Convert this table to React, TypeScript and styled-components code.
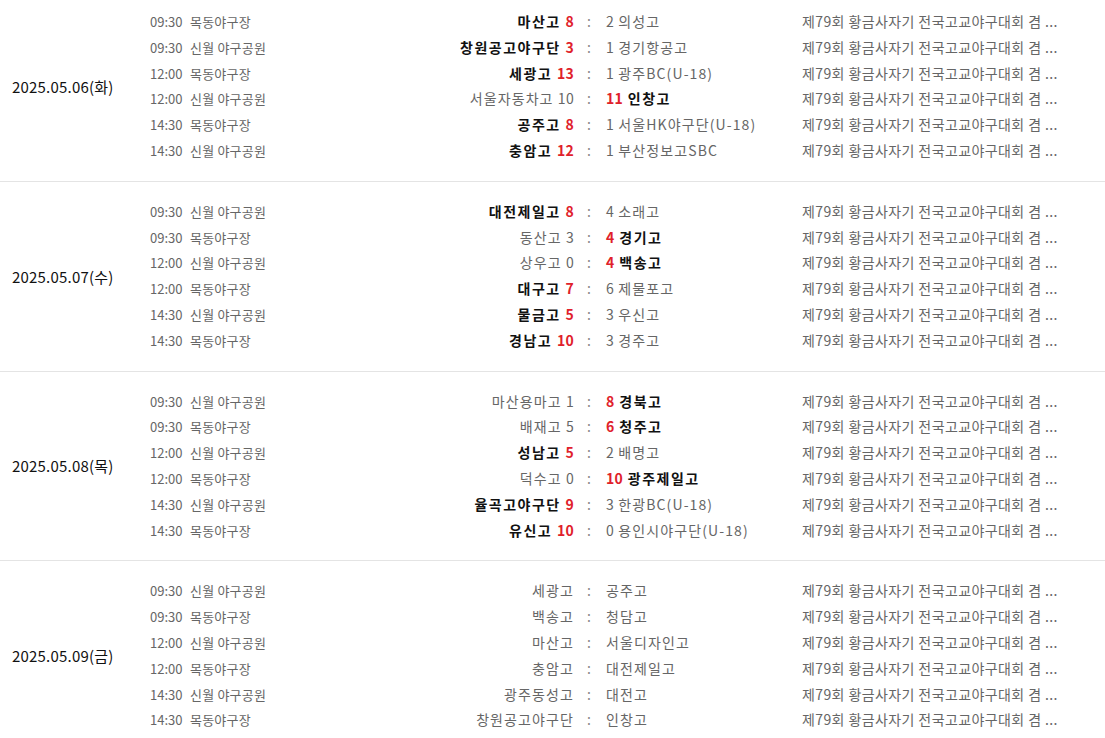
import React from 'react';
import styled, { createGlobalStyle } from 'styled-components';

const GlobalStyle = createGlobalStyle`
  html, body {
    margin: 0;
    padding: 0;
    background: #ffffff;
  }

  body {
    font-family: "Noto Sans CJK KR", "Noto Sans", sans-serif;
    color: #666666;
  }
`;

type Game = [string, string, string, number | null, string, number | null];

interface Day {
  date: string;
  games: Game[];
}

const league = '제79회 황금사자기 전국고교야구대회 겸 ...';
const mokdong = '목동야구장';
const sinwol = '신월 야구공원';

const schedule: Day[] = [
  {
    date: '2025.05.06(화)',
    games: [
      ['09:30', mokdong, '마산고', 8, '의성고', 2],
      ['09:30', sinwol, '창원공고야구단', 3, '경기항공고', 1],
      ['12:00', mokdong, '세광고', 13, '광주BC(U-18)', 1],
      ['12:00', sinwol, '서울자동차고', 10, '인창고', 11],
      ['14:30', mokdong, '공주고', 8, '서울HK야구단(U-18)', 1],
      ['14:30', sinwol, '충암고', 12, '부산정보고SBC', 1],
    ],
  },
  {
    date: '2025.05.07(수)',
    games: [
      ['09:30', sinwol, '대전제일고', 8, '소래고', 4],
      ['09:30', mokdong, '동산고', 3, '경기고', 4],
      ['12:00', sinwol, '상우고', 0, '백송고', 4],
      ['12:00', mokdong, '대구고', 7, '제물포고', 6],
      ['14:30', sinwol, '물금고', 5, '우신고', 3],
      ['14:30', mokdong, '경남고', 10, '경주고', 3],
    ],
  },
  {
    date: '2025.05.08(목)',
    games: [
      ['09:30', sinwol, '마산용마고', 1, '경북고', 8],
      ['09:30', mokdong, '배재고', 5, '청주고', 6],
      ['12:00', sinwol, '성남고', 5, '배명고', 2],
      ['12:00', mokdong, '덕수고', 0, '광주제일고', 10],
      ['14:30', sinwol, '율곡고야구단', 9, '한광BC(U-18)', 3],
      ['14:30', mokdong, '유신고', 10, '용인시야구단(U-18)', 0],
    ],
  },
  {
    date: '2025.05.09(금)',
    games: [
      ['09:30', sinwol, '세광고', null, '공주고', null],
      ['09:30', mokdong, '백송고', null, '청담고', null],
      ['12:00', sinwol, '마산고', null, '서울디자인고', null],
      ['12:00', mokdong, '충암고', null, '대전제일고', null],
      ['14:30', sinwol, '광주동성고', null, '대전고', null],
      ['14:30', mokdong, '창원공고야구단', null, '인창고', null],
    ],
  },
];

const DayGroup = styled.section`
  display: flex;
  align-items: center;
  padding: 17px 0;
  border-bottom: 1px solid #e4e4e4;

  &:first-child {
    padding-top: 9px;
  }
`;

const DateCell = styled.div`
  width: 150px;
  flex-shrink: 0;
  padding-left: 12px;
  box-sizing: border-box;
  font-size: 15px;
  color: #111111;
  letter-spacing: 0.2px;
`;

const GameList = styled.ul`
  flex: 1;
  list-style: none;
  margin: 0;
  padding: 0;
`;

const GameRow = styled.li`
  display: grid;
  grid-template-columns: 40px 150px 234px 30px 198px 1fr;
  height: 25.8px;
  align-items: center;
  font-size: 14px;
  line-height: 25.8px;
  white-space: nowrap;
`;

const Time = styled.span`
  font-size: 13px;
  color: #666666;
`;

const Venue = styled.span`
  font-size: 13px;
  color: #666666;
  letter-spacing: 0.2px;
`;

const Team = styled.span<{ $align: 'left' | 'right'; $win: boolean }>`
  text-align: ${(p) => p.$align};
  color: ${(p) => (p.$win ? '#111111' : '#666666')};
  font-weight: ${(p) => (p.$win ? 700 : 400)};
  padding-left: ${(p) => (p.$align === 'left' ? '2px' : '0')};
  letter-spacing: ${(p) => (p.$win ? '1.5px' : '1.1px')};
`;

const Score = styled.span<{ $win: boolean }>`
  color: ${(p) => (p.$win ? '#e0212b' : '#666666')};
  font-weight: ${(p) => (p.$win ? 700 : 400)};
  letter-spacing: 0.3px;
`;

const Colon = styled.span`
  text-align: center;
  color: #888888;
`;

const League = styled.span`
  color: #666666;
  letter-spacing: 0.4px;
  overflow: hidden;
`;

const GameLine: React.FC<{ game: Game }> = ({ game }) => {
  const [time, venue, home, hs, away, as] = game;
  const played = hs !== null && as !== null;
  const homeWin = played && (hs as number) > (as as number);
  const awayWin = played && (as as number) > (hs as number);

  return (
    <GameRow>
      <Time>{time}</Time>
      <Venue>{venue}</Venue>
      <Team $align="right" $win={homeWin}>
        {home}
        {played && (
          <>
            {' '}
            <Score $win={homeWin}>{hs}</Score>
          </>
        )}
      </Team>
      <Colon>:</Colon>
      <Team $align="left" $win={awayWin}>
        {played && (
          <>
            <Score $win={awayWin}>{as}</Score>{' '}
          </>
        )}
        {away}
      </Team>
      <League>{league}</League>
    </GameRow>
  );
};

export default function App() {
  return (
    <>
      <GlobalStyle />
      <main>
        {schedule.map((day) => (
          <DayGroup key={day.date}>
            <DateCell>{day.date}</DateCell>
            <GameList>
              {day.games.map((g, i) => (
                <GameLine key={i} game={g} />
              ))}
            </GameList>
          </DayGroup>
        ))}
      </main>
    </>
  );
}
